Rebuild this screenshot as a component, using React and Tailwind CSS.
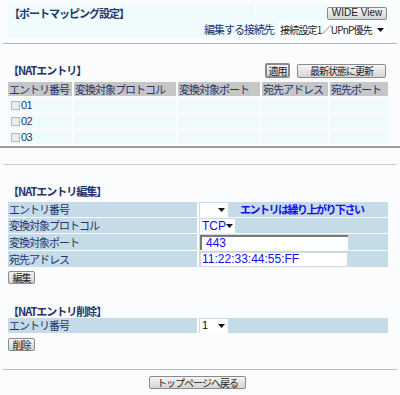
import React from 'react';

// Classic router-style button
const Btn = ({ children, className = '' }) => (
    <div className={`h-[13px] flex items-center justify-center border border-[#8a8a8a] rounded-[2px] bg-gradient-to-b from-[#f6f6f6] to-[#d4d4d4] text-[10px] text-[#222] leading-none whitespace-nowrap ${className}`}>
        {children}
    </div>
);

// Fake select box with a small triangle
const Sel = ({ children, className = '' }) => (
    <div className={`h-[14px] bg-white flex items-center justify-between pl-[2px] pr-[3px] whitespace-nowrap overflow-hidden ${className}`}>
        <span>{children}</span>
        <svg width="7" height="4" viewBox="0 0 7 4" className="shrink-0"><path d="M0 0h7L3.5 4z" fill="#111" /></svg>
    </div>
);

const App = () => {
    const rows = ['01', '02', '03'];
    return (
        <div className="w-[400px] h-[395px] overflow-hidden bg-[#fafcfe] text-[#24346c] font-['Noto_Sans_CJK_JP',sans-serif] text-[11px] tracking-[-1px] leading-none">
            {/* --- Header box --- */}
            <div className="ml-[8px] mt-[5px] w-[380px]">
                <div className="flex gap-[2px] h-[16px]">
                    <div className="w-[246px] bg-[#effbfd] font-bold flex items-center pl-[1px]">【ポートマッピング設定】</div>
                    <div className="flex-1 bg-[#effbfd] flex items-center justify-end pr-[1px]">
                        <Btn className="w-[60px] tracking-normal font-['Liberation_Sans',sans-serif]">WIDE View</Btn>
                    </div>
                </div>
                <div className="mt-[1px] h-[15px] bg-[#effbfd] flex items-center justify-end gap-[4px] pr-[1px]">
                    <span>編集する接続先</span>
                    <Sel className="w-[109px] text-[#222] text-[10px] tracking-[-0.8px]">接続設定1／UPnP優先</Sel>
                </div>
            </div>
            <div className="mt-[6px] mx-[3px] h-[2px] border-t border-t-[#b4b4b4] border-b border-b-white"></div>

            {/* --- NAT entry list --- */}
            <div className="ml-[8px] w-[380px]">
                <div className="mt-[17px] h-[17px] flex items-center justify-between pr-[2px]">
                    <span className="font-bold">【NATエントリ】</span>
                    <div className="flex items-center gap-[7px]">
                        <Btn className="w-[25px] h-[15px] border-2 border-[#5b9bd5]">適用</Btn>
                        <Btn className="w-[89px] h-[14px]">最新状態に更新</Btn>
                    </div>
                </div>
                <div className="mt-[3px] grid grid-cols-[64px_102px_82px_66px_58px] gap-[2px]">
                    {['エントリ番号', '変換対象プロトコル', '変換対象ポート', '宛先アドレス', '宛先ポート'].map((h) => (
                        <div key={h} className="h-[14px] bg-[#c6c6c6] flex items-center pl-[1px] whitespace-nowrap overflow-hidden">{h}</div>
                    ))}
                    {rows.map((r) => (
                        <React.Fragment key={r}>
                            <div className="h-[14px] bg-[#effbfd] flex items-center pl-[3px] gap-[1px]">
                                <span className="w-[9px] h-[9px] border border-[#b8b8b8] bg-[#ececec]"></span>
                                <span className="font-['Liberation_Sans',sans-serif] tracking-[-0.5px] text-[11px]">{r}</span>
                            </div>
                            <div className="h-[14px] bg-[#effbfd]"></div>
                            <div className="h-[14px] bg-[#effbfd]"></div>
                            <div className="h-[14px] bg-[#effbfd]"></div>
                            <div className="h-[14px] bg-[#effbfd]"></div>
                        </React.Fragment>
                    ))}
                </div>
            </div>
            <div className="mt-[2px] h-[2px] bg-[#9a9a9a]"></div>
            <div className="mt-[16px] mx-[3px] h-[1px] bg-[#cfcfcf]"></div>

            {/* --- NAT entry edit --- */}
            <div className="ml-[8px] w-[380px]">
                <div className="mt-[20px] h-[13px] flex items-center font-bold">【NATエントリ編集】</div>
                <div className="mt-[4px] grid grid-cols-[189px_1fr] gap-x-[2px] gap-y-[1px]">
                    <div className="h-[15px] bg-[#c6dbe8] flex items-center pl-[1px]">エントリ番号</div>
                    <div className="h-[15px] bg-[#c6dbe8] flex items-center pl-[1px] gap-[12px]">
                        <Sel className="w-[28px] bg-[#f2f2f2]"></Sel>
                        <span className="text-[#1010f0] font-bold tracking-[-1.5px]">エントリは繰り上がり下さい</span>
                    </div>
                    <div className="h-[15px] bg-[#c6dbe8] flex items-center pl-[1px]">変換対象プロトコル</div>
                    <div className="h-[15px] bg-[#c6dbe8] flex items-center pl-[1px]">
                        <Sel className="w-[35px] text-[#1010f0] font-['Liberation_Sans',sans-serif] text-[12px] tracking-normal">TCP</Sel>
                    </div>
                    <div className="h-[16px] bg-[#c6dbe8] flex items-center pl-[1px]">変換対象ポート</div>
                    <div className="h-[16px] bg-[#c6dbe8] flex items-center pl-[1px]">
                        <div className="w-[148px] h-[15px] bg-white border-t-2 border-l-2 border-[#7a7a7a] flex items-center pl-[4px] text-[#1010f0] font-['Liberation_Sans',sans-serif] text-[12px] tracking-normal">443</div>
                    </div>
                    <div className="h-[16px] bg-[#c6dbe8] flex items-center pl-[1px]">宛先アドレス</div>
                    <div className="h-[16px] bg-[#c6dbe8] flex items-center pl-[1px]">
                        <div className="w-[148px] h-[15px] bg-white border border-[#d8d8d8] flex items-center pl-[1px] text-[#1010f0] font-['Liberation_Sans',sans-serif] text-[12px] tracking-normal">11:22:33:44:55:FF</div>
                    </div>
                </div>
                <Btn className="mt-[4px] w-[27px]">編集</Btn>

                {/* --- NAT entry delete --- */}
                <div className="mt-[21px] h-[12px] flex items-center font-bold">【NATエントリ削除】</div>
                <div className="mt-[1px] grid grid-cols-[189px_1fr] gap-x-[2px]">
                    <div className="h-[15px] bg-[#c6dbe8] flex items-center pl-[1px]">エントリ番号</div>
                    <div className="h-[15px] bg-[#c6dbe8] flex items-center pl-[1px]">
                        <Sel className="w-[28px] text-[#111] font-['Liberation_Sans',sans-serif] tracking-normal">1</Sel>
                    </div>
                </div>
                <Btn className="mt-[5px] w-[27px]">削除</Btn>
            </div>
            <div className="mt-[18px] mx-[3px] h-[1px] bg-[#bdbdbd]"></div>
            <Btn className="mt-[6px] ml-[149px] w-[97px]">トップページへ戻る</Btn>
        </div>
    );
};

export default App;
